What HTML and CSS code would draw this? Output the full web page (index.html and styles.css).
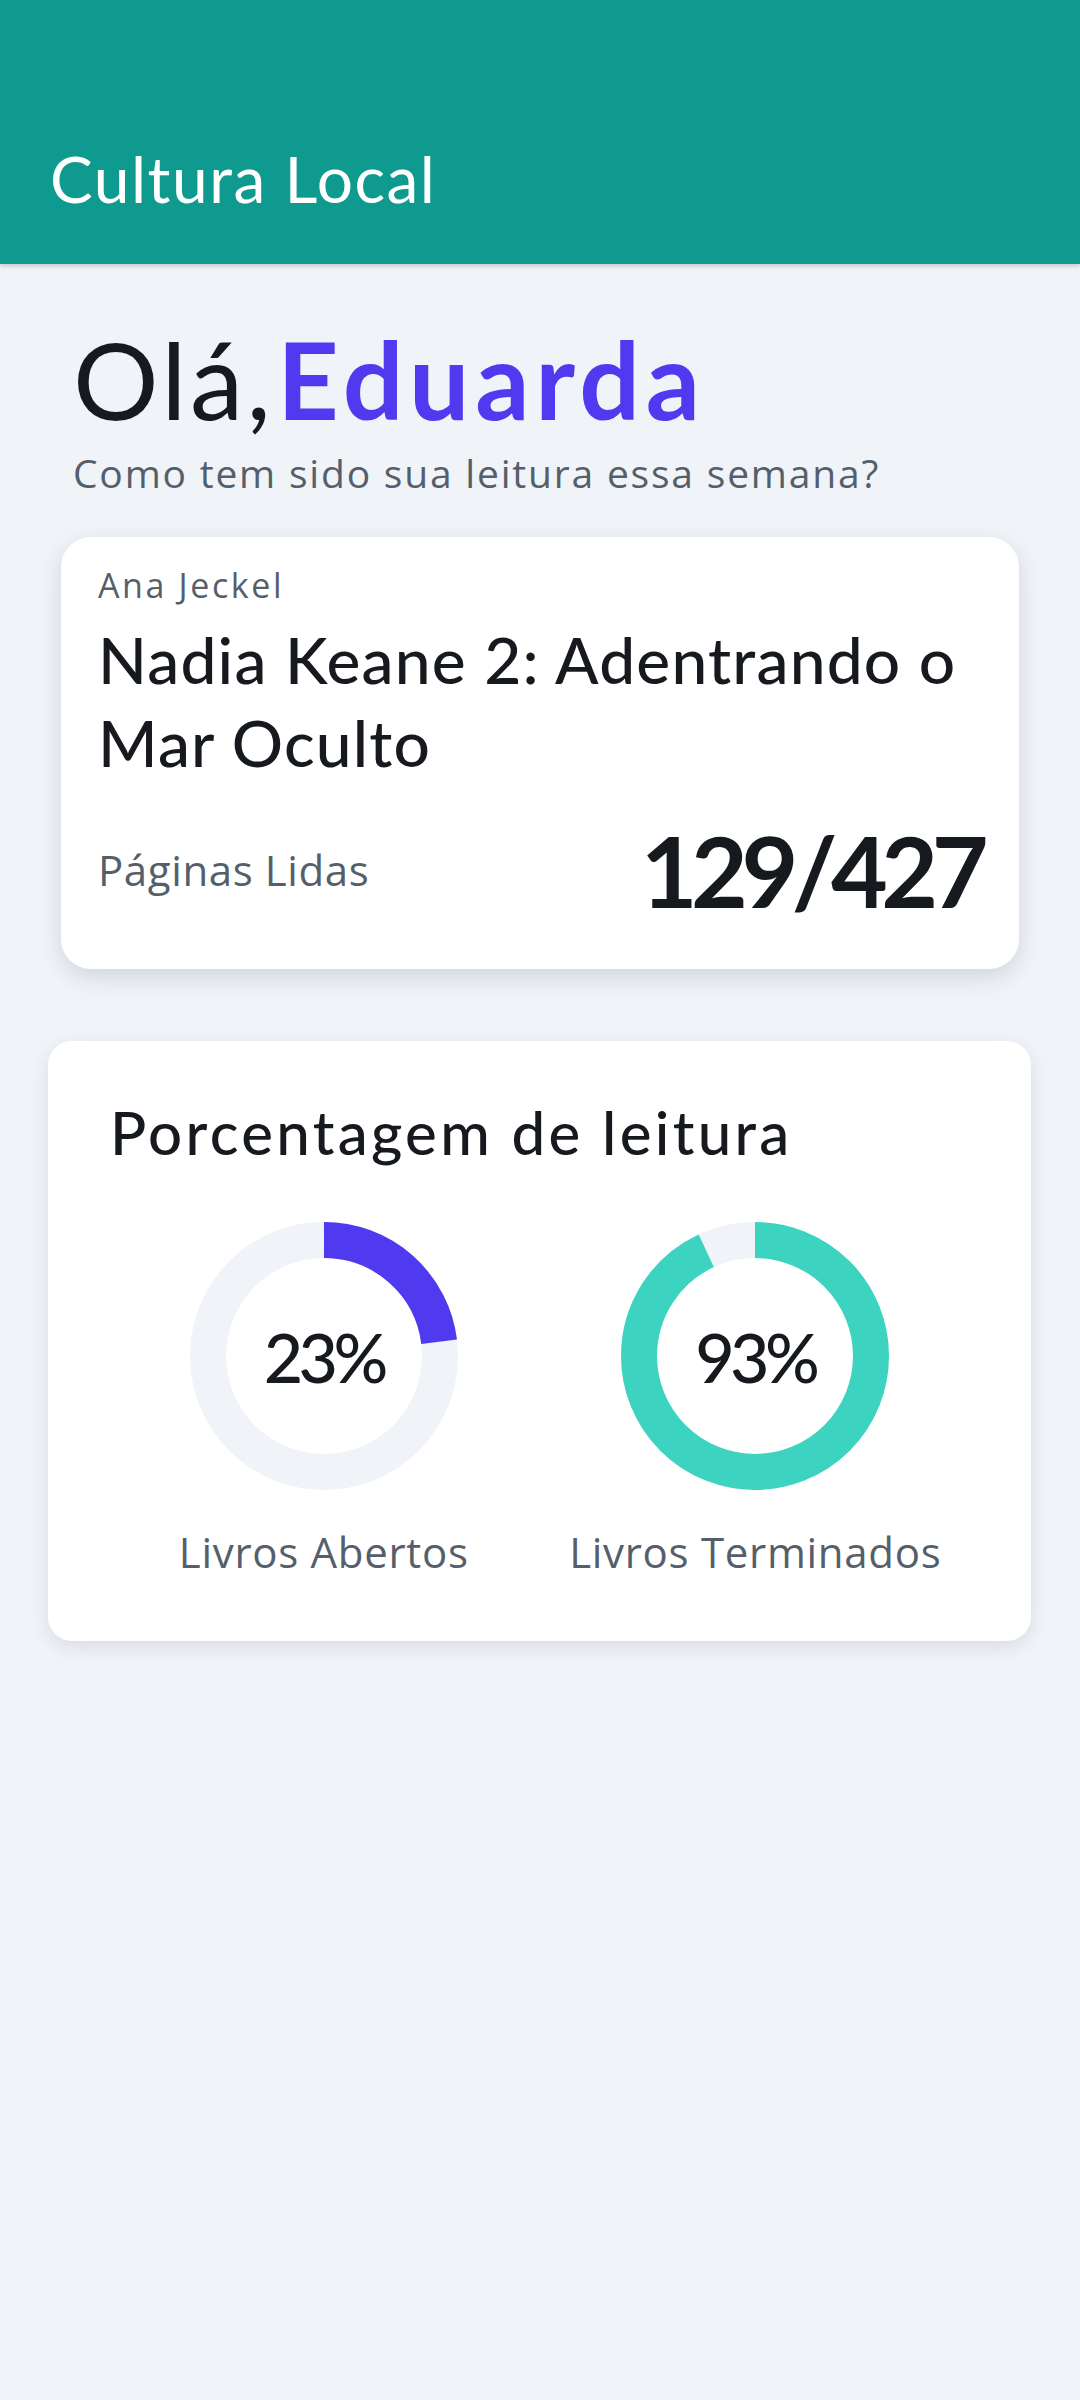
FILE: index.html
```html
<!DOCTYPE html>
<html lang="pt-BR">
<head>
<meta charset="utf-8">
<title>Cultura Local</title>
<link rel="stylesheet" href="styles.css">
</head>
<body>
<header class="appbar">
  <h1 class="appbar-title">Cultura Local</h1>
</header>
<main class="content">
  <section class="greeting">
    <h2 class="hello">Olá,<span class="name">Eduarda</span></h2>
    <p class="subtitle">Como tem sido sua leitura essa semana?</p>
  </section>

  <article class="book-card">
    <div class="author">Ana Jeckel</div>
    <div class="book-title">Nadia Keane 2: Adentrando o Mar Oculto</div>
    <div class="progress-row">
      <span class="progress-label">Páginas Lidas</span>
      <span class="progress-value">129/427</span>
    </div>
  </article>

  <section class="stats-card">
    <h3 class="stats-title">Porcentagem de leitura</h3>
    <div class="donuts">
      <div class="donut-item">
        <div class="donut">
          <svg width="268" height="268" viewBox="0 0 268 268">
            <circle cx="134" cy="134" r="116" fill="none" stroke="#f0f3f8" stroke-width="36"/>
            <circle cx="134" cy="134" r="116" fill="none" stroke="#4f3aef" stroke-width="36"
              stroke-dasharray="167.64 728.85" transform="rotate(-90 134 134)"/>
          </svg>
          <span class="donut-value">23%</span>
        </div>
        <div class="donut-label">Livros Abertos</div>
      </div>
      <div class="donut-item">
        <div class="donut">
          <svg width="268" height="268" viewBox="0 0 268 268">
            <circle cx="134" cy="134" r="116" fill="none" stroke="#f0f3f8" stroke-width="36"/>
            <circle cx="134" cy="134" r="116" fill="none" stroke="#3cd3c1" stroke-width="36"
              stroke-dasharray="677.83 728.85" transform="rotate(-90 134 134)"/>
          </svg>
          <span class="donut-value">93%</span>
        </div>
        <div class="donut-label">Livros Terminados</div>
      </div>
    </div>
  </section>
</main>
</body>
</html>
```

FILE: styles.css
```css
* { box-sizing: border-box; }

html, body {
  margin: 0;
  padding: 0;
}

body {
  background: #f0f3f8;
  font-family: Lato, "Noto Sans", sans-serif;
  color: #16191d;
  min-height: 2400px;
}

.appbar {
  height: 264px;
  background: #0f9a8f;
  padding: 139px 0 0 50px;
  box-shadow: 0 2px 4px rgba(0, 0, 0, 0.18);
  position: relative;
  z-index: 1;
}

.appbar-title {
  margin: 0;
  font-size: 64px;
  line-height: 80px;
  font-weight: 400;
  letter-spacing: 1.5px;
  color: #ffffff;
}

.content {
  display: flex;
  flex-direction: column;
}

.greeting {
  padding: 55px 0 0 73px;
}

.hello {
  margin: 0;
  font-size: 107px;
  line-height: 120px;
  font-weight: 400;
  color: #16191d;
  letter-spacing: 3.5px;
}

.name {
  margin-left: 3px;
  font-weight: 700;
  letter-spacing: 5.7px;
  color: #4f3aef;
}

.subtitle {
  margin: 10px 0 0;
  font-family: "Open Sans", Lato, sans-serif;
  font-size: 39px;
  line-height: 48px;
  letter-spacing: 1.8px;
  color: #555f6b;
}

.book-card {
  margin: 40px 61px 0;
  background: #ffffff;
  border-radius: 30px;
  padding: 28px 37px 44px;
  box-shadow: 0 8px 22px rgba(30, 40, 60, 0.14);
}

.author {
  font-family: "Open Sans", Lato, sans-serif;
  font-size: 34px;
  line-height: 40px;
  letter-spacing: 2.6px;
  color: #555f6b;
}

.book-title {
  margin-top: 13px;
  font-size: 64px;
  line-height: 83px;
  font-weight: 500;
  letter-spacing: 1.2px;
  color: #16191d;
}

.progress-row {
  margin-top: 31px;
  display: flex;
  justify-content: space-between;
  align-items: center;
}

.progress-label {
  font-family: "Open Sans", Lato, sans-serif;
  font-size: 42px;
  line-height: 50px;
  letter-spacing: 0.6px;
  color: #555f6b;
}

.progress-value {
  font-size: 98px;
  line-height: 110px;
  font-weight: 700;
  letter-spacing: -6.5px;
  color: #16191d;
}

.stats-card {
  margin: 72px 49px 0 48px;
  background: #ffffff;
  border-radius: 24px;
  padding: 55px 60px 64px;
  box-shadow: 0 6px 18px rgba(30, 40, 60, 0.10);
}

.stats-title {
  margin: 0 0 0 2px;
  font-size: 60px;
  line-height: 72px;
  font-weight: 500;
  letter-spacing: 3.3px;
  color: #16191d;
}

.donuts {
  margin-top: 54px;
  display: grid;
  grid-template-columns: 1fr 1fr;
}

.donut-item {
  display: flex;
  flex-direction: column;
  align-items: center;
}

.donut {
  position: relative;
  width: 268px;
  height: 268px;
}

.donut svg {
  display: block;
}

.donut-value {
  position: absolute;
  inset: 0;
  display: flex;
  align-items: center;
  justify-content: center;
  font-size: 68px;
  font-weight: 500;
  letter-spacing: -4.5px;
  color: #16191d;
}

.donut-label {
  margin-top: 37px;
  font-family: "Open Sans", Lato, sans-serif;
  font-size: 42px;
  line-height: 50px;
  letter-spacing: 0.7px;
  color: #555f6b;
}
```
